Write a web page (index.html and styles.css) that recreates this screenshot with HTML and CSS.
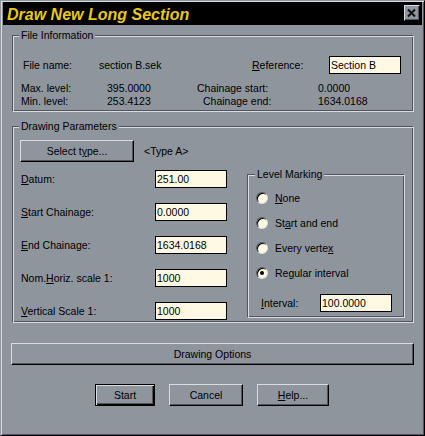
FILE: index.html
```html
<!DOCTYPE html>
<html>
<head>
<meta charset="utf-8">
<link rel="stylesheet" href="styles.css">
</head>
<body>
<div class="window">
  <div class="titlebar">
    <span class="title">Draw New Long Section</span>
    <span class="close"><svg width="14" height="14" viewBox="0 0 14 14"><path d="M3 3.5 L10 10.5 M10 3.5 L3 10.5" stroke="#111" stroke-width="2" fill="none"/></svg></span>
  </div>
  <div class="content">
    <div class="group g-file">
      <span class="legend">File Information</span>
      <div class="file-row">
        <span class="c-fn">File name:</span>
        <span class="c-fv">section B.sek</span>
        <span class="c-ref"><u>R</u>eference:</span>
        <span class="edit">Section B</span>
      </div>
      <div class="levels">
        <span>Max. level:</span><span>395.0000</span><span>Chainage start:</span><span>0.0000</span>
        <span>Min. level:</span><span>253.4123</span><span class="ce">Chainage end:</span><span>1634.0168</span>
      </div>
    </div>

    <div class="group g-draw">
      <span class="legend">Drawing Parameters</span>
      <div class="type-row">
        <button class="btn btn-type">Select t<u>y</u>pe...</button>
        <span class="type-val">&lt;Type A&gt;</span>
      </div>
      <div class="lower">
        <div class="fields">
          <div class="field"><span class="flabel"><u>D</u>atum:</span><span class="edit">251.00</span></div>
          <div class="field"><span class="flabel"><u>S</u>tart Chainage:</span><span class="edit">0.0000</span></div>
          <div class="field"><span class="flabel"><u>E</u>nd Chainage:</span><span class="edit">1634.0168</span></div>
          <div class="field"><span class="flabel">Nom.<u>H</u>oriz. scale 1:</span><span class="edit">1000</span></div>
          <div class="field"><span class="flabel"><u>V</u>ertical Scale 1:</span><span class="edit">1000</span></div>
        </div>
        <div class="group g-level">
          <span class="legend">Level Marking</span>
          <div class="radios">
            <div class="radio"><span class="dot"></span><span><u>N</u>one</span></div>
            <div class="radio"><span class="dot"></span><span>St<u>a</u>rt and end</span></div>
            <div class="radio"><span class="dot"></span><span>Every verte<u>x</u></span></div>
            <div class="radio"><span class="dot on"></span><span>Regular interval</span></div>
          </div>
          <div class="interval"><span class="ilabel"><u>I</u>nterval:</span><span class="edit">100.0000</span></div>
        </div>
      </div>
    </div>

    <button class="btn wide">Drawing Options</button>

    <div class="actions">
      <button class="btn default b-start">Start</button>
      <button class="btn b-cancel">Cancel</button>
      <button class="btn b-help"><u>H</u>elp...</button>
    </div>
  </div>
</div>
</body>
</html>
```

FILE: styles.css
```css
:root {
  --face: #8e959d;
  --light: #d9dde1;
  --dark: #4f565d;
  --cream: #fff8e2;
}

html, body {
  margin: 0;
  padding: 0;
  background: var(--face);
}

body {
  font-family: "Liberation Sans", Arial, sans-serif;
  font-size: 10.5px;
  line-height: 13px;
  color: #000;
}

u {
  text-decoration: underline;
  text-underline-offset: 1px;
}

.window {
  width: 425px;
  height: 436px;
  box-sizing: border-box;
  border: 1px solid;
  border-color: var(--face) #000 #000 var(--face);
  box-shadow: inset 1px 1px 0 var(--light), inset -1px -1px 0 var(--dark);
  padding: 1px 2px 2px 2px;
  background: var(--face);
}

.titlebar {
  height: 23px;
  background: #000;
  display: flex;
  justify-content: space-between;
  align-items: flex-start;
}

.title {
  color: #e8c81a;
  font-family: "Liberation Sans", Arial, sans-serif;
  font-style: italic;
  font-weight: bold;
  font-size: 16px;
  line-height: 21px;
  padding: 2px 0 0 4px;
}

.close {
  width: 16px;
  height: 16px;
  box-sizing: border-box;
  margin: 3px 2px 0 0;
  background: var(--face);
  border: 1px solid;
  border-color: var(--light) #000 #000 var(--light);
  box-shadow: inset -1px -1px 0 var(--dark);
  display: flex;
}

.close svg {
  display: block;
}

.group {
  position: relative;
  box-sizing: border-box;
  border: 1px solid;
  border-color: var(--dark) var(--light) var(--light) var(--dark);
  box-shadow: inset 1px 1px 0 var(--light), inset -1px -1px 0 var(--dark);
}

.legend {
  position: absolute;
  top: -7px;
  left: 6px;
  padding: 0 2px;
  background: var(--face);
  line-height: 13px;
  white-space: nowrap;
}

.edit {
  box-sizing: border-box;
  width: 72px;
  height: 18px;
  background: var(--cream);
  border: 1px solid #000;
  padding-left: 1px;
  line-height: 16px;
  white-space: nowrap;
}

/* File information */
.g-file {
  width: 402px;
  height: 77px;
  margin: 10px 0 0 9px;
}

.file-row {
  display: flex;
  align-items: center;
  height: 18px;
  margin: 20px 0 0 10px;
}

.c-fn { width: 76px; }
.c-fv { width: 153px; }
.c-ref { width: 77px; }

.levels {
  display: grid;
  grid-template-columns: 86px 90px 121px auto;
  margin: 8px 0 0 8px;
  line-height: 13px;
}

.levels .ce {
  padding-left: 6px;
}

/* Drawing parameters */
.g-draw {
  width: 402px;
  height: 197px;
  margin: 14px 0 0 9px;
}

.type-row {
  display: flex;
  align-items: center;
  margin: 13px 0 0 7px;
}

.btn {
  font: inherit;
  color: #000;
  background: var(--face);
  box-sizing: border-box;
  height: 22px;
  padding: 0;
  margin: 0;
  border: 1px solid;
  border-color: var(--light) #000 #000 var(--light);
  box-shadow: inset -1px -1px 0 var(--dark);
  border-radius: 0;
  text-align: center;
  line-height: 18px;
}

.btn-type {
  width: 114px;
}

.type-val {
  margin-left: 10px;
}

.lower {
  display: flex;
  align-items: flex-start;
  margin-top: 8px;
}

.fields {
  width: 234px;
  box-sizing: border-box;
  padding-left: 8px;
  display: flex;
  flex-direction: column;
  gap: 15px;
}

.field {
  display: flex;
  align-items: center;
  height: 18px;
}

.flabel {
  width: 134px;
}

/* Level marking */
.g-level {
  width: 158px;
  height: 144px;
  margin-top: 4px;
}

.g-level .legend {
  left: 7px;
}

.radios {
  display: flex;
  flex-direction: column;
  gap: 13px;
  margin: 17px 0 0 8px;
}

.radio {
  display: flex;
  align-items: center;
  height: 12px;
}

.dot {
  position: relative;
  width: 12px;
  height: 12px;
  box-sizing: border-box;
  border-radius: 50%;
  background: var(--cream);
  border: 1px solid;
  border-color: var(--dark) var(--light) var(--light) var(--dark);
  box-shadow: inset 1px 1px 0 #000;
  margin-right: 7px;
  flex: none;
}

.dot.on::after {
  content: "";
  position: absolute;
  left: 3px;
  top: 3px;
  width: 4px;
  height: 4px;
  border-radius: 50%;
  background: #000;
}

.interval {
  display: flex;
  align-items: center;
  margin: 15px 0 0 13px;
}

.ilabel {
  width: 59px;
}

/* Bottom buttons */
.wide {
  display: block;
  width: 403px;
  margin: 20px 0 0 8px;
}

.actions {
  display: flex;
  gap: 14px;
  margin-top: 19px;
  padding-left: 92px;
}

.b-start { width: 60px; }
.b-cancel { width: 74px; }
.b-help { width: 72px; }

.btn.default {
  border-color: #000;
  box-shadow: inset 1px 1px 0 var(--light), inset -1px -1px 0 #000, inset -2px -2px 0 var(--dark);
}
```
